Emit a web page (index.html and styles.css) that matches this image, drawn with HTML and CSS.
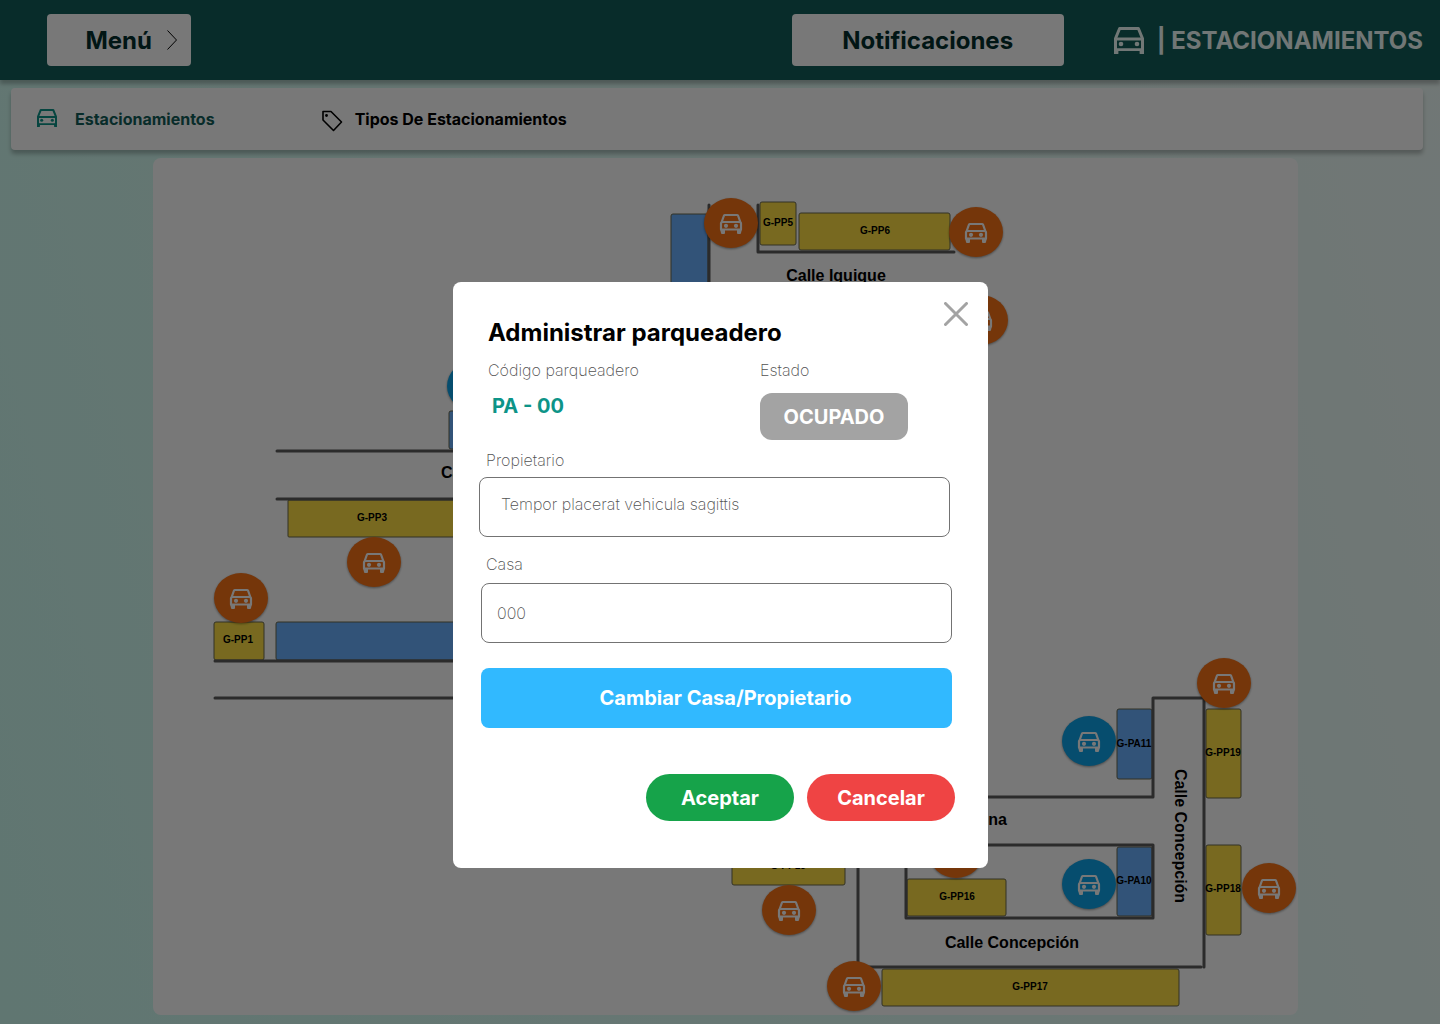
FILE: index.html
```html
<!DOCTYPE html>
<html lang="es">
<head>
<meta charset="utf-8">
<meta name="viewport" content="width=device-width, initial-scale=1">
<title>Estacionamientos</title>
<link rel="stylesheet" href="styles.css">
</head>
<body>
<svg class="symbols" aria-hidden="true">
  <symbol id="car" viewBox="0 0 30 27">
    <path fill="none" stroke="currentColor" stroke-width="3" stroke-linejoin="round" d="M1.5 27V11.5L5.6 1.5H24.4L28.5 11.5V27"/>
    <path fill="none" stroke="currentColor" stroke-width="2.8" d="M1.5 12H28.5M1.5 22.6H28.5"/>
    <path fill="currentColor" d="M0 22H4.4V26.4Q4.4 27 3.8 27H.6Q0 27 0 26.4zM25.6 22H30V26.4Q30 27 29.4 27H26.2Q25.6 27 25.6 26.4z"/>
    <circle cx="7" cy="17" r="2.3" fill="currentColor"/><circle cx="23" cy="17" r="2.3" fill="currentColor"/>
  </symbol>
  <g id="pin-car">
    <path fill="none" stroke="#fff" stroke-width="2.2" stroke-linejoin="round" d="M-9.5 -.5L-7 -7.5Q-6.700 -8 -6 -8H6Q6.700 -8 7 -7.500L9.500 -.5M-10 6.500V.5Q-10 -1 -8.500 -1H8.500Q10 -1 10 .5V6.500z"/>
    <path fill="#fff" d="M-11 6H-6V10Q-6 11 -7 11H-9Q-10 11 -10 10zM6 6H11L10 10Q10 11 9 11H7Q6 11 6 10z"/>
    <circle cx="-5" cy="2.800" r="2.100" fill="#fff"/><circle cx="5" cy="2.800" r="2.100" fill="#fff"/>
  </g>
</svg>

<header class="topbar">
  <button class="top-button menu-button" type="button">Menú
    <svg class="chevron" viewBox="0 0 10 20" aria-hidden="true"><path d="M.5 .5L9.500 10L.5 19.500"/></svg>
  </button>
  <button class="top-button notices-button" type="button">Notificaciones</button>
  <div class="brand">
    <svg class="brand-icon" aria-hidden="true"><use href="#car"/></svg>
    <span>| ESTACIONAMIENTOS</span>
  </div>
</header>

<nav class="tabs">
  <a class="tab tab-active" href="#estacionamientos">
    <svg class="tab-car" aria-hidden="true"><use href="#car"/></svg>Estacionamientos</a>
  <a class="tab" href="#tipos">
    <svg class="tab-tag" viewBox="0 0 22 22" aria-hidden="true"><path fill="none" stroke="currentColor" stroke-width="1.600" stroke-linejoin="round" d="M2 1.500H10L20.500 12L12.500 20.500L2 10z"/><circle cx="5.500" cy="5.500" r="1.400" fill="currentColor"/></svg>Tipos De Estacionamientos</a>
</nav>

<main class="map-area">
  <svg class="map" viewBox="153 158 1145 857" role="img" aria-label="Plano de estacionamientos">
    <g class="slot slot-yellow">
      <rect x="760" y="202" width="36" height="43" rx="2"/>
      <rect x="799" y="213" width="151" height="37" rx="2"/>
      <rect x="288" y="500" width="180" height="37" rx="1"/>
      <rect x="214" y="622" width="50" height="38" rx="2"/>
      <rect x="1206" y="709" width="35" height="89" rx="2"/>
      <rect x="1206" y="845" width="35" height="90" rx="2"/>
      <rect x="732" y="848" width="113" height="37" rx="2"/>
      <rect x="907" y="879" width="99" height="37" rx="2"/>
      <rect x="882" y="969" width="297" height="37" rx="2"/>
    </g>
    <g class="slot slot-blue">
      <rect x="671" y="214" width="37" height="80" rx="2"/>
      <rect x="449" y="411" width="30" height="38" rx="2"/>
      <rect x="276" y="622" width="200" height="38" rx="2"/>
      <rect x="1117" y="709" width="35" height="70" rx="2"/>
      <rect x="1117" y="847" width="35" height="69" rx="2"/>
    </g>
    <g class="streets">
      <path d="M709 205V300M758 205V252H954"/>
      <path d="M277 451H480M277 499H480M215 661H480M215 698H480"/>
      <path d="M980 797H1153V698H1204V967M980 845H1153V918H906V860M858 860V967H1201"/>
    </g>
    <g class="street-names">
      <text x="836" y="281" text-anchor="middle">Calle Iquique</text>
      <text x="441" y="478">Calle</text>
      <text x="1007" y="825" text-anchor="end">na</text>
      <text x="1012" y="948" text-anchor="middle">Calle Concepción</text>
      <text transform="translate(1175 836) rotate(90)" text-anchor="middle">Calle Concepción</text>
    </g>
    <g class="slot-names">
      <text x="778" y="226">G-PP5</text>
      <text x="875" y="234">G-PP6</text>
      <text x="372" y="521">G-PP3</text>
      <text x="238" y="643">G-PP1</text>
      <text x="1134" y="747">G-PA11</text>
      <text x="1223" y="756">G-PP19</text>
      <text x="1134" y="884">G-PA10</text>
      <text x="1223" y="892">G-PP18</text>
      <text x="788" y="869">G-PP15</text>
      <text x="957" y="900">G-PP16</text>
      <text x="1030" y="990">G-PP17</text>
    </g>
    <g class="pins pins-orange">
      <g transform="translate(731 223)"><ellipse rx="27" ry="25"/><use href="#pin-car"/></g>
      <g transform="translate(976 232)"><ellipse rx="27" ry="25"/><use href="#pin-car"/></g>
      <g transform="translate(981 320)"><ellipse rx="27" ry="25"/><use href="#pin-car"/></g>
      <g transform="translate(374 562)"><ellipse rx="27" ry="25"/><use href="#pin-car"/></g>
      <g transform="translate(241 598)"><ellipse rx="27" ry="25"/><use href="#pin-car"/></g>
      <g transform="translate(1224 683)"><ellipse rx="27" ry="25"/><use href="#pin-car"/></g>
      <g transform="translate(1269 888)"><ellipse rx="27" ry="25"/><use href="#pin-car"/></g>
      <g transform="translate(789 910)"><ellipse rx="27" ry="25"/><use href="#pin-car"/></g>
      <g transform="translate(956 853)"><ellipse rx="27" ry="25"/><use href="#pin-car"/></g>
      <g transform="translate(854 986)"><ellipse rx="27" ry="25"/><use href="#pin-car"/></g>
    </g>
    <g class="pins pins-blue">
      <g transform="translate(474 386)"><ellipse rx="27" ry="25"/><use href="#pin-car"/></g>
      <g transform="translate(1089 741)"><ellipse rx="27" ry="25"/><use href="#pin-car"/></g>
      <g transform="translate(1089 884)"><ellipse rx="27" ry="25"/><use href="#pin-car"/></g>
    </g>
  </svg>
</main>

<div class="overlay">
  <form class="dialog" role="dialog" aria-modal="true" aria-labelledby="dialog-title">
    <button class="close" type="button" aria-label="Cerrar"><svg viewBox="0 0 24 24"><path d="M1.500 1.500L22.500 22.500M22.500 1.500L1.500 22.500"/></svg></button>
    <h1 class="dialog-title" id="dialog-title">Administrar parqueadero</h1>
    <div class="summary">
      <div class="summary-item">
        <span class="caption">Código parqueadero</span>
        <strong class="code">PA - 00</strong>
      </div>
      <div class="summary-item">
        <span class="caption">Estado</span>
        <span class="status">OCUPADO</span>
      </div>
    </div>
    <div class="field field-owner">
      <label class="caption" for="owner">Propietario</label>
      <input class="input" id="owner" type="text" value="Tempor placerat vehicula sagittis">
    </div>
    <div class="field field-house">
      <label class="caption" for="house">Casa</label>
      <input class="input" id="house" type="text" value="000">
    </div>
    <button class="change" type="button">Cambiar Casa/Propietario</button>
    <div class="actions">
      <button class="action accept" type="submit">Aceptar</button>
      <button class="action cancel" type="button">Cancelar</button>
    </div>
  </form>
</div>
</body>
</html>
```

FILE: styles.css
```css
* {
  box-sizing: border-box;
}

body {
  margin: 0;
  min-height: 100vh;
  font-family: Inter, "Liberation Sans", sans-serif;
  color: #000;
  background: linear-gradient(75deg, #ccfbf1, #f0fdfa);
}

button,
input {
  font-family: inherit;
  margin: 0;
}

button {
  border: 0;
  padding: 0;
  cursor: pointer;
}

.symbols {
  position: absolute;
  width: 0;
  height: 0;
}

/* Top bar */

.topbar {
  display: flex;
  align-items: center;
  height: 80px;
  padding: 0 17px 0 47px;
  background: #115e59;
  box-shadow: 0 4px 4px rgba(0, 0, 0, 0.25);
}

.top-button {
  height: 52px;
  border-radius: 4px;
  background: #fff;
  color: #042f2e;
  font-size: 24px;
  font-weight: 700;
}

.menu-button {
  display: flex;
  align-items: center;
  justify-content: flex-end;
  gap: 15px;
  width: 144px;
  padding-right: 14px;
}

.chevron {
  width: 10px;
  height: 20px;
  fill: none;
  stroke: #000;
}

.notices-button {
  width: 272px;
  margin-left: auto;
}

.brand {
  display: flex;
  align-items: center;
  gap: 13px;
  margin-left: 50px;
  color: #f0fdfa;
  font-size: 24px;
  font-weight: 700;
  white-space: nowrap;
}

.brand-icon {
  width: 30px;
  height: 27px;
}

/* Section tabs */

.tabs {
  display: flex;
  align-items: center;
  gap: 106px;
  height: 62px;
  margin: 8px 17px 8px 11px;
  padding: 0 26px;
  border-radius: 4px;
  background: #fff;
  box-shadow: 0 4px 4px rgba(0, 0, 0, 0.25);
}

.tab {
  display: flex;
  align-items: center;
  gap: 12px;
  color: #000;
  font-size: 16px;
  font-weight: 700;
  text-decoration: none;
}

.tab-active {
  gap: 18px;
  color: #115e59;
}

.tab-car {
  width: 20px;
  height: 18px;
  margin-bottom: 2px;
  color: #0d9488;
}

.tab-tag {
  width: 22px;
  height: 22px;
  margin-top: 4px;
}

/* Parking map */

.map-area {
  margin: 0 142px 0 153px;
  padding-bottom: 9px;
}

.map {
  display: block;
  width: 100%;
  border-radius: 8px;
  background: #fff;
}

.slot rect {
  stroke: #6b6b50;
}

.slot-yellow {
  fill: #ffe044;
}

.slot-blue {
  fill: #6ab0ff;
}

.streets {
  fill: none;
  stroke: #5c5c5c;
  stroke-width: 3;
  stroke-linecap: round;
  stroke-linejoin: round;
}

.street-names,
.slot-names {
  font-family: "Liberation Sans", Arial, sans-serif;
  font-weight: 700;
}

.street-names {
  font-size: 16px;
}

.slot-names {
  font-size: 10px;
  text-anchor: middle;
}

.pins ellipse {
  filter: drop-shadow(0 1px 1px rgba(0, 0, 0, 0.4));
}

.pins-orange {
  fill: #f97316;
}

.pins-blue {
  fill: #0ea5e9;
}

/* Dialog */

.overlay {
  position: fixed;
  inset: 0;
  display: flex;
  justify-content: center;
  align-items: flex-start;
  padding: 282px 0 0 1px;
  overflow: auto;
  background: rgba(0, 0, 0, 0.53);
}

.dialog {
  position: relative;
  width: 535px;
  padding: 35px 36px 47px 28px;
  border-radius: 8px;
  background: #fff;
}

.close {
  position: absolute;
  top: 20px;
  right: 20px;
  width: 24px;
  height: 24px;
  background: none;
}

.close svg {
  display: block;
  fill: none;
  stroke: #a3a3a3;
  stroke-width: 3;
  stroke-linecap: round;
}

.dialog-title {
  margin: 0 0 9px;
  padding-left: 7px;
  font-size: 24px;
  line-height: 32px;
  font-weight: 700;
}

.summary {
  display: grid;
  grid-template-columns: 272px auto;
  padding-left: 7px;
}

.summary-item {
  display: flex;
  flex-direction: column;
  align-items: flex-start;
}

.caption,
.input {
  color: #525252;
  font-size: 16px;
  line-height: 24px;
  font-weight: 200;
  font-variant-ligatures: none;
}

.code {
  padding: 12px 4px 0;
  color: #0d9488;
  font-size: 20px;
  line-height: 24px;
}

.status {
  width: 148px;
  height: 47px;
  margin-top: 11px;
  border-radius: 12px;
  background: #a3a3a3;
  color: #fff;
  font-size: 20px;
  line-height: 48px;
  font-weight: 700;
  text-align: center;
}

.field {
  display: flex;
  flex-direction: column;
}

.field .caption {
  padding-left: 5px;
}

.field-owner {
  margin: 8px 2px 0 -2px;
}

.field-owner .caption {
  padding-left: 7px;
}

.field-house {
  margin-top: 15px;
}

.input {
  width: 100%;
  height: 60px;
  margin-top: 5px;
  padding: 0 15px;
  border: 1px solid #737373;
  border-radius: 8px;
  background: #fff;
}

.field-owner .input {
  padding: 0 21px 6px;
}

.field-house .input {
  margin-top: 7px;
}

.change {
  display: block;
  width: 100%;
  height: 60px;
  margin-top: 25px;
  padding-left: 18px;
  border-radius: 8px;
  background: #31b9ff;
  color: #fff;
  font-size: 20px;
  font-weight: 700;
}

.actions {
  display: flex;
  justify-content: flex-end;
  gap: 13px;
  margin: 46px -3px 0 0;
}

.action {
  width: 148px;
  height: 47px;
  border-radius: 24px;
  color: #fff;
  font-size: 20px;
  font-weight: 700;
}

.accept {
  background: #16a34a;
}

.cancel {
  background: #ef4444;
}
```
